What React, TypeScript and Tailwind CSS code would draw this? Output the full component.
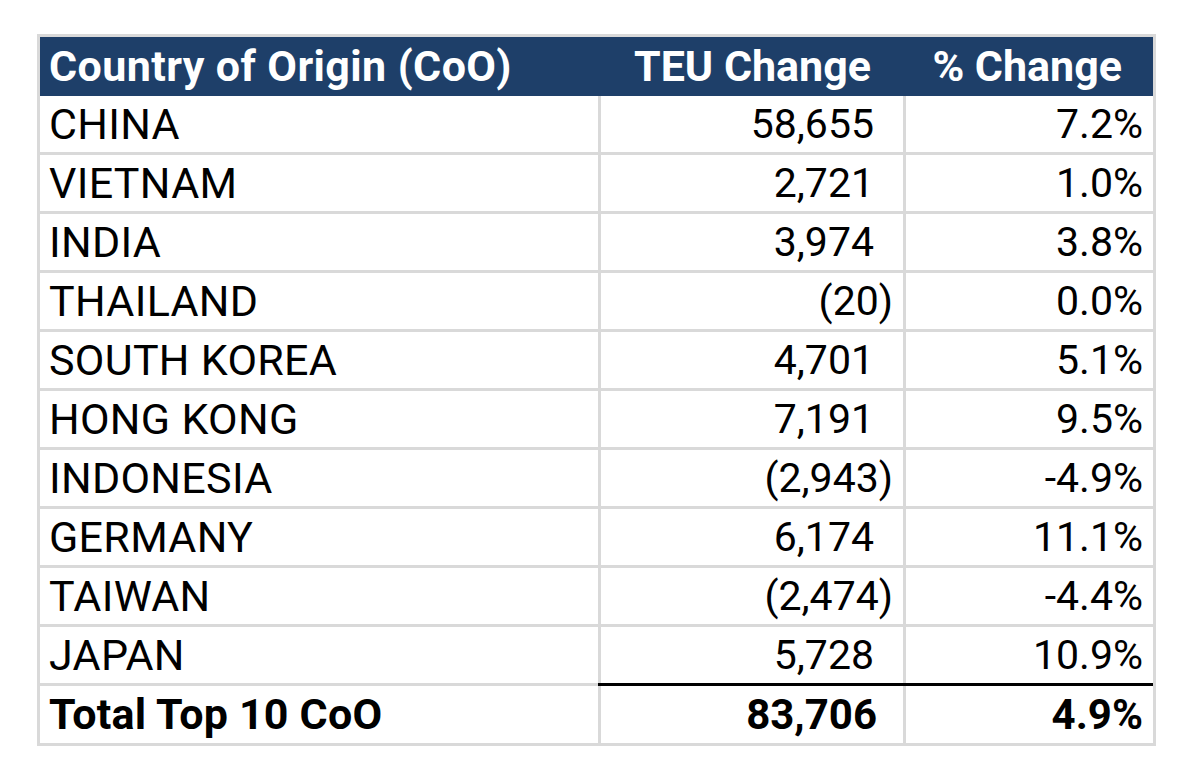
import React from "react";

type Row = { name: string; teu: string; neg: boolean; pct: string };

const rows: Row[] = [
  { name: "CHINA", teu: "58,655", neg: false, pct: "7.2%" },
  { name: "VIETNAM", teu: "2,721", neg: false, pct: "1.0%" },
  { name: "INDIA", teu: "3,974", neg: false, pct: "3.8%" },
  { name: "THAILAND", teu: "(20)", neg: true, pct: "0.0%" },
  { name: "SOUTH KOREA", teu: "4,701", neg: false, pct: "5.1%" },
  { name: "HONG KONG", teu: "7,191", neg: false, pct: "9.5%" },
  { name: "INDONESIA", teu: "(2,943)", neg: true, pct: "-4.9%" },
  { name: "GERMANY", teu: "6,174", neg: false, pct: "11.1%" },
  { name: "TAIWAN", teu: "(2,474)", neg: true, pct: "-4.4%" },
  { name: "JAPAN", teu: "5,728", neg: false, pct: "10.9%" },
];

function GrayDivider() {
  return <div className="h-[3px] bg-[#d9d9d9]" />;
}

export default function App() {
  return (
    <div className="w-[1190px] h-[776px] bg-white pt-[34px] pl-[37px] font-['Roboto',_'Liberation_Sans',_sans-serif] text-black">
      <div className="w-[1119px] border-[3px] border-[#d9d9d9] bg-white">
        {/* header */}
        <div className="flex h-[59px] bg-[#1e3f69] text-white font-bold text-[43px] leading-none">
          <div className="w-[561px] flex items-center pl-[9px] tracking-[0.4px]">Country of Origin (CoO)</div>
          <div className="w-[305px] flex items-center justify-end pr-[35px]">TEU Change</div>
          <div className="w-[247px] flex items-center justify-end pr-[31px]">% Change</div>
        </div>
        {rows.map((r, i) => (
          <div key={r.name}>
            <div className="flex h-[56px] leading-none">
              <div className="w-[558px] flex items-center pl-[9px] text-[43px] tracking-[0.3px]">{r.name}</div>
              <div className="w-[3px] bg-[#d9d9d9]" />
              <div
                className={
                  r.neg
                    ? "w-[302px] flex items-center justify-end pr-[10px] text-[41px]"
                    : "w-[302px] flex items-center justify-end pr-[29px] text-[41px]"
                }
              >
                {r.teu}
              </div>
              <div className="w-[3px] bg-[#d9d9d9]" />
              <div className="w-[247px] flex items-center justify-end pr-[10px] text-[41px]">{r.pct}</div>
            </div>
            {i < rows.length - 1 ? (
              <GrayDivider />
            ) : (
              <div className="flex h-[3px]">
                <div className="w-[558px] bg-[#d9d9d9]" />
                <div className="flex-1 bg-black" />
              </div>
            )}
          </div>
        ))}
        {/* total */}
        <div className="flex h-[57px] leading-none font-bold">
          <div className="w-[558px] flex items-center pl-[9px] text-[43px] tracking-[0.2px]">Total Top 10 CoO</div>
          <div className="w-[3px] bg-[#d9d9d9]" />
          <div className="w-[302px] flex items-center justify-end pr-[26px] text-[42px]">83,706</div>
          <div className="w-[3px] bg-[#d9d9d9]" />
          <div className="w-[247px] flex items-center justify-end pr-[10px] text-[42px]">4.9%</div>
        </div>
      </div>
    </div>
  );
}
